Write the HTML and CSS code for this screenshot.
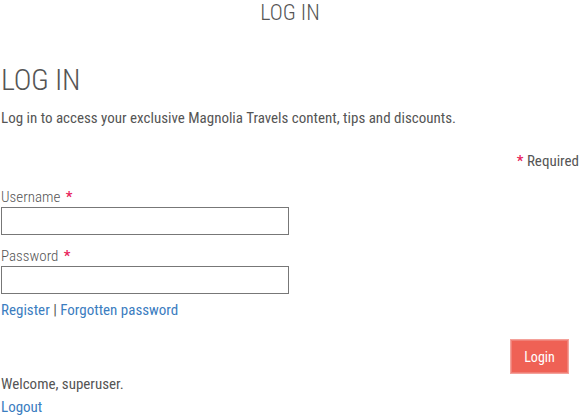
FILE: index.html
```html
<!DOCTYPE html>
<html>
<head>
<meta charset="utf-8">
<link rel="stylesheet" href="styles.css">
</head>
<body>
<header class="top">LOG IN</header>
<main class="content">
  <h1 class="title">LOG IN</h1>
  <p class="intro">Log in to access your exclusive Magnolia Travels content, tips and discounts.</p>
  <div class="required"><span class="star">*</span> Required</div>
  <form class="form">
    <div class="group">
      <label class="label">Username <span class="star">*</span></label>
      <input class="field" type="text">
    </div>
    <div class="group">
      <label class="label">Password <span class="star">*</span></label>
      <input class="field" type="password">
    </div>
    <div class="links"><a href="#">Register</a> | <a href="#">Forgotten password</a></div>
    <div class="actions"><button class="btn" type="button">Login</button></div>
  </form>
  <div class="welcome">Welcome, superuser.</div>
  <a class="logout" href="#">Logout</a>
</main>
</body>
</html>
```
FILE: styles.css
```css
html, body { margin: 0; padding: 0; background: #fff; }
body {
  font-family: Roboto, "Liberation Sans", sans-serif;
  font-stretch: condensed;
  color: #555;
  font-size: 15px;
}
.top {
  text-align: center;
  font-size: 22px;
  font-weight: 300;
  line-height: 24px;
  padding-top: 1px;
  color: #555;
}
.content { padding: 0 1px; }
.title {
  margin: 35px 0 0;
  font-size: 30px;
  font-weight: 300;
  letter-spacing: -0.3px;
  line-height: 40px;
  color: #555;
}
.intro { margin: 9px 0 0; line-height: 18px; }
.required { text-align: right; margin-top: 25px; line-height: 18px; }
.star { color: #e8225a; font-weight: 500; margin-left: 2px; }
.form { display: flex; flex-direction: column; margin-top: 18px; gap: 12px; }
.group { display: flex; flex-direction: column; gap: 1px; }
.label { line-height: 18px; font-weight: 300; color: #555; }
.field {
  width: 288px; height: 28px; box-sizing: border-box;
  border: 1px solid #777; margin: 0; padding: 0;
}
.links { line-height: 18px; color: #555; margin-top: -5px; }
.links a, .logout { color: #3b7dbf; text-decoration: none; }
.actions { display: flex; justify-content: flex-end; padding-right: 10px; margin-top: 8px; }
.btn {
  background: #ef6155; color: #fff; border: 1px solid #f4a19a;
  box-shadow: inset 0 0 0 1px #f07f76;
  width: 59px; height: 35px; font-family: inherit; font-size: 14px; font-stretch: condensed;
}
.welcome { margin-top: 1px; line-height: 18px; }
.logout { display: block; margin-top: 5px; line-height: 18px; }
```
